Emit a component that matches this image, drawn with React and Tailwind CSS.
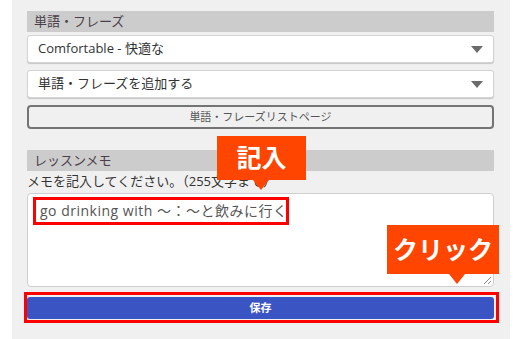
import React from 'react';

const font = { fontFamily: '"Open Sans", "Noto Sans CJK JP", sans-serif' };

function Caret() {
  return (
    <svg width="12" height="7" viewBox="0 0 12 7" className="shrink-0">
      <path d="M0 0 L12 0 L6 7 Z" fill="#6b6b6b" />
    </svg>
  );
}

function SelectBox({ label }) {
  return (
    <div className="flex h-[28px] items-center justify-between rounded-[3px] border border-[#d4d4d4] bg-white pl-[10px] pr-[10px] shadow-[0_1px_1px_rgba(0,0,0,0.18)]">
      <span className="text-[13px] text-[#333]">{label}</span>
      <Caret />
    </div>
  );
}

function SectionHeader({ children }) {
  return (
    <div className="flex h-[21px] items-center bg-[#cccccc] pl-[7px] text-[13px] text-[#4a3f4a]">
      {children}
    </div>
  );
}

function Callout({ text, className, tip }) {
  return (
    <div className={`absolute flex items-center justify-center bg-[#ff4500] text-[25px] font-bold text-white ${className}`}>
      {text}
      <div className={`absolute top-full h-0 w-0 border-x-[8px] border-t-[10px] border-x-transparent border-t-[#ff4500] ${tip}`} />
    </div>
  );
}

export default function App() {
  return (
    <div className="relative h-[339px] w-[524px] overflow-hidden bg-white" style={font}>
      <div className="ml-[12px] h-full w-[498px] bg-[#f0f0f0] pl-[15px] pr-[16px] pt-[11px]">
        <SectionHeader>単語・フレーズ</SectionHeader>
        <div className="mt-[3px] flex flex-col gap-[7px]">
          <SelectBox label="Comfortable - 快適な" />
          <SelectBox label="単語・フレーズを追加する" />
          <button className="flex h-[24px] items-center justify-center rounded-[4px] border-2 border-[#747474] bg-[#f0f0f0] text-[11px] text-[#555]">
            単語・フレーズリストページ
          </button>
        </div>

        <div className="mt-[21px]">
          <SectionHeader>レッスンメモ</SectionHeader>
          <div className="flex h-[22px] items-center text-[13px] text-[#333]">
            メモを記入してください。（255文字まで）
          </div>
          <div className="h-[94px] rounded-[4px] border border-[#cfcfcf] bg-white pl-[12px] pr-[10px] pt-[6px] text-[14px] tracking-[0.5px] text-[#555]">
            go drinking with ～：～と飲みに行く
          </div>
          <button className="mt-[10px] flex h-[22px] w-full items-center justify-center rounded-[3px] bg-[#3b54c4] text-[11px] font-bold text-white">
            保存
          </button>
        </div>
      </div>

      {/* annotation frames */}
      <div className="absolute left-[33px] top-[197px] h-[28px] w-[256px] border-[3px] border-[#ff0000]" />
      <div className="absolute left-[24px] top-[292px] h-[31px] w-[475px] border-[3px] border-[#ff0000]" />

      <Callout text="記入" className="left-[217px] top-[136px] h-[44px] w-[89px]" tip="left-[36px]" />
      <Callout text="クリック" className="left-[387px] top-[225px] h-[49px] w-[112px]" tip="left-[62px]" />

      {/* textarea resize grip */}
      <svg className="absolute left-[483px] top-[276px]" width="9" height="9" viewBox="0 0 9 9">
        <path d="M8 1 L1 8 M8 5 L5 8" stroke="#888" strokeWidth="1" />
      </svg>
    </div>
  );
}
